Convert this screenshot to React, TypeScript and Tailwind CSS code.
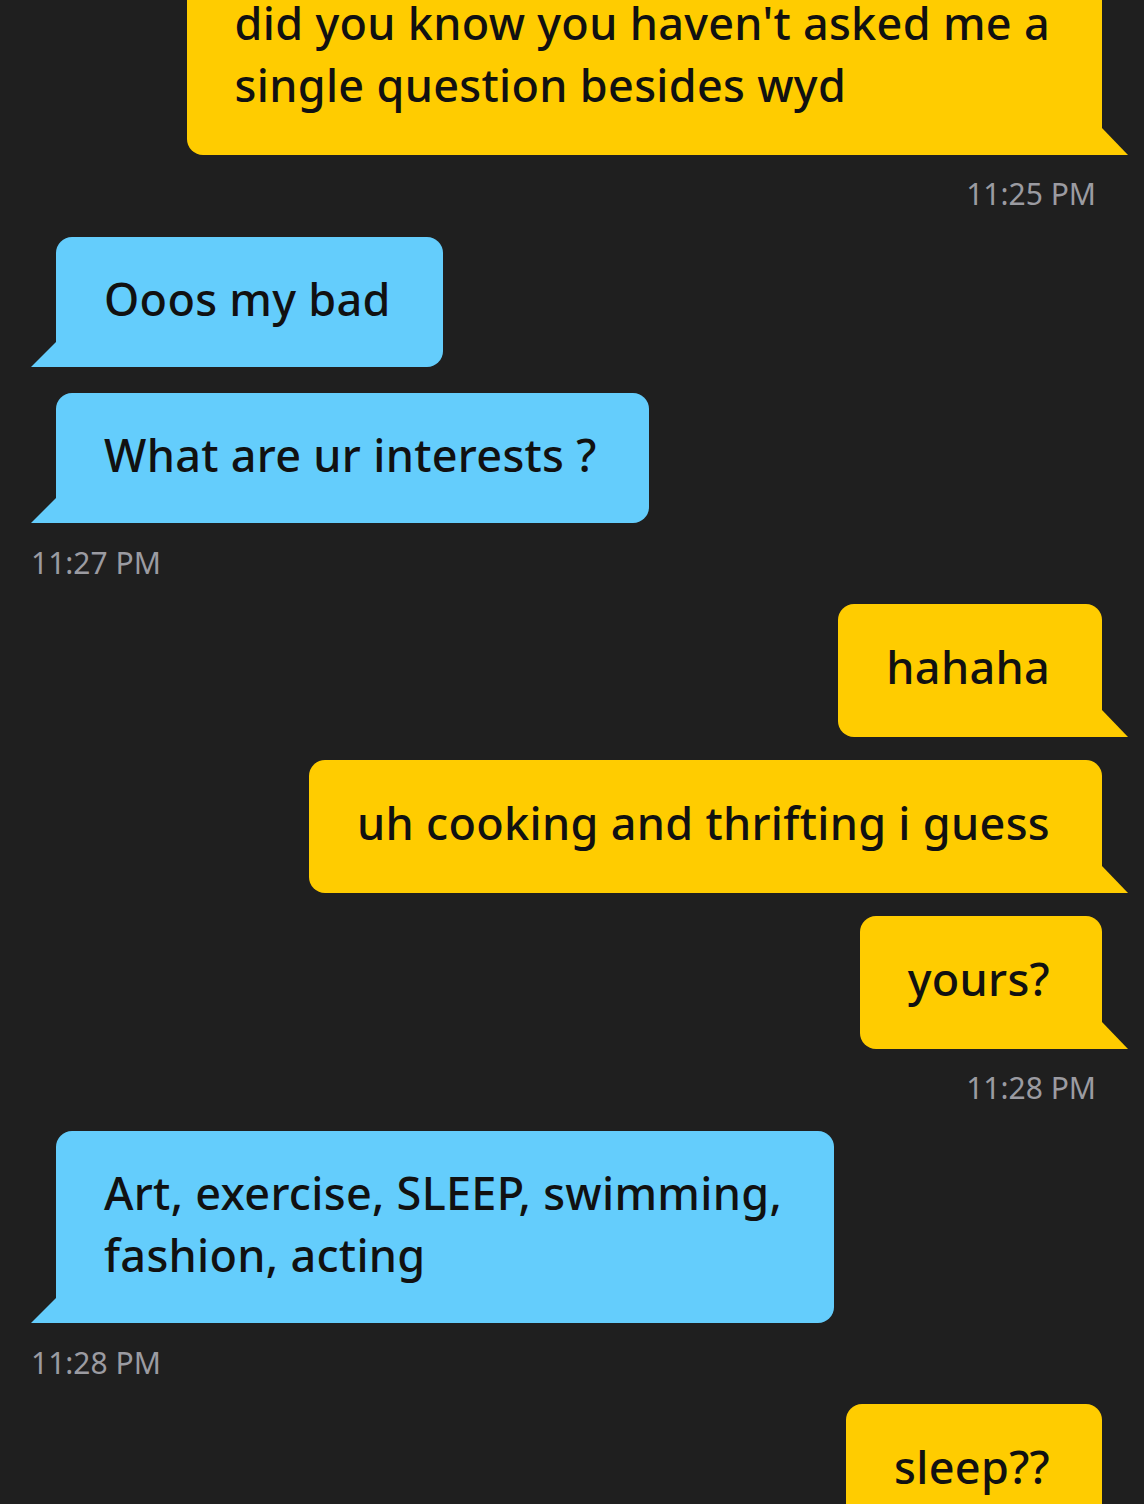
import React from "react";

function Sent({ children, className = "" }: { children: React.ReactNode; className?: string }) {
  return (
    <div className={`flex justify-end pr-[42px] ${className}`}>
      <div className="relative rounded-[16px] rounded-br-none bg-[#ffcc00] pl-[48px] pr-[52px] pt-[32px] pb-[39px] text-[45px] font-medium leading-[62px] tracking-[0.3px] text-[#111111]">
        {children}
        <svg className="absolute bottom-0 right-[-26px]" width="26" height="27" viewBox="0 0 26 27">
          <polygon points="0,0 26,27 0,27" fill="#ffcc00" />
        </svg>
      </div>
    </div>
  );
}

function Recv({ children, className = "" }: { children: React.ReactNode; className?: string }) {
  return (
    <div className={`flex justify-start pl-[56px] ${className}`}>
      <div className="relative rounded-[16px] rounded-bl-none bg-[#64cdfc] pl-[48px] pr-[52px] pt-[31px] pb-[37px] text-[45px] font-medium leading-[62px] tracking-[0.3px] text-[#111111]">
        {children}
        <svg className="absolute bottom-0 left-[-25px]" width="25" height="25" viewBox="0 0 25 25">
          <polygon points="25,0 25,25 0,25" fill="#64cdfc" />
        </svg>
      </div>
    </div>
  );
}

function Time({ side, children, className = "" }: { side: "left" | "right"; children: React.ReactNode; className?: string }) {
  return (
    <div
      className={`text-[30px] leading-[36px] text-[#9b9ba1] ${
        side === "left" ? "pl-[31px] text-left" : "pr-[48px] text-right"
      } ${className}`}
    >
      {children}
    </div>
  );
}

export default function App() {
  return (
    <div
      className="h-[1504px] w-[1144px] overflow-hidden bg-[#1f1f1f]"
      style={{ fontFamily: '"Noto Sans", "Open Sans", sans-serif' }}
    >
      <div className="flex flex-col">
        <Sent className="mt-[-40px]">
          did you know you haven't asked me a
          <br />
          single question besides wyd
        </Sent>
        <Time side="right" className="mt-[21px]">11:25 PM</Time>
        <Recv className="mt-[25px]">Ooos my bad</Recv>
        <Recv className="mt-[26px]">What are ur interests ?</Recv>
        <Time side="left" className="mt-[22px]">11:27 PM</Time>
        <Sent className="mt-[23px]">hahaha</Sent>
        <Sent className="mt-[23px]">uh cooking and thrifting i guess</Sent>
        <Sent className="mt-[23px]">yours?</Sent>
        <Time side="right" className="mt-[21px]">11:28 PM</Time>
        <Recv className="mt-[25px]">
          Art, exercise, SLEEP, swimming,
          <br />
          fashion, acting
        </Recv>
        <Time side="left" className="mt-[22px]">11:28 PM</Time>
        <Sent className="mt-[23px]">sleep??</Sent>
      </div>
    </div>
  );
}
